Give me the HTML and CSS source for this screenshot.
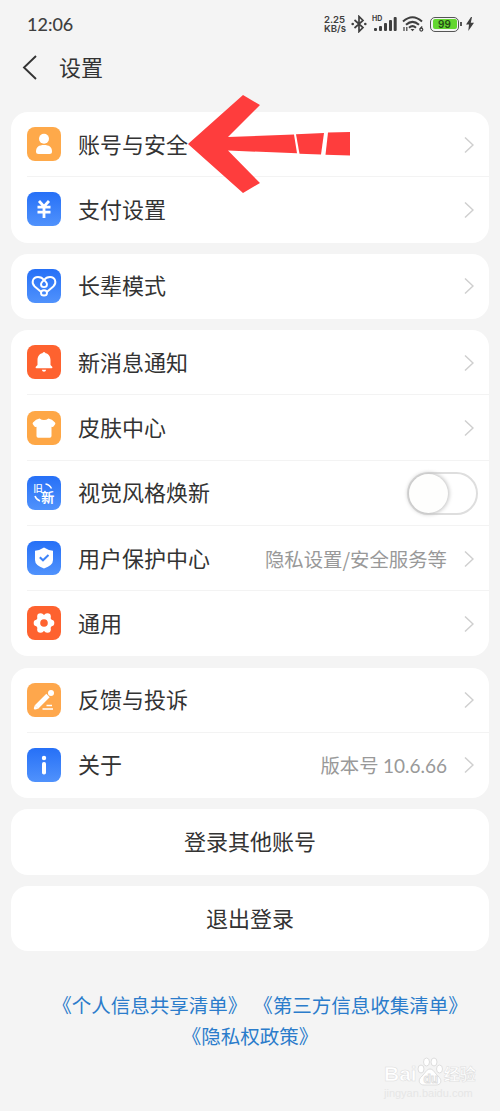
FILE: index.html
```html
<!DOCTYPE html>
<html lang="zh-CN">
<head>
  <meta charset="UTF-8">
  <meta name="viewport" content="width=device-width, initial-scale=1.0">
  <title>设置</title>
  <link rel="stylesheet" href="styles.css">
</head>
<body>

<!-- shared gradients and the row arrow -->
<svg class="defs" width="0" height="0">
  <defs>
    <linearGradient id="blue" x1="0" y1="0" x2="0" y2="1"><stop offset="0" stop-color="#2670f7"/><stop offset="1" stop-color="#5092fc"/></linearGradient>
    <symbol id="chevron" viewBox="0 0 10 18"><path d="M1 1.500L9 9L1 16.500" fill="none" stroke="#cfcfcf" stroke-width="1.500"/></symbol>
  </defs>
</svg>

<div class="status-bar">
  <span class="time">12:06</span>
  <div class="status-icons">
    <div class="speed"><span>2.25</span><span>KB/s</span></div>
    <svg class="bluetooth" width="16" height="18" viewBox="0 0 16 18">
      <path d="M3.500 5L12 12.500L8 16.500V1.500L12 5.500L3.500 13" fill="none" stroke="#3f3f3f" stroke-width="1.700"/>
      <circle cx="1.700" cy="9" r="1.300" fill="#3f3f3f"/><circle cx="14.300" cy="9" r="1.300" fill="#3f3f3f"/>
    </svg>
    <div class="signal">
      <span class="hd">HD</span>
      <svg width="24" height="18" viewBox="0 0 24 18" fill="#3f3f3f">
        <rect x="1" y="13" width="3" height="3" rx="1"/><rect x="6" y="11" width="3" height="5" rx="1"/><rect x="11" y="8" width="3" height="8" rx="1"/><rect x="16" y="5" width="3" height="11" rx="1"/><rect x="20.700" y="2" width="3" height="14" rx="1"/>
      </svg>
    </div>
    <svg class="wifi" width="22" height="18" viewBox="0 0 22 18">
      <g fill="none" stroke="#3f3f3f" stroke-width="2">
        <path d="M1 6.500Q10.500 -2 20 6.500"/><path d="M4 9.800Q10.500 4 17 9.800"/><path d="M7 12.700Q10.500 9.500 14 12.700"/>
        <path d="M2 12v4M4.800 12v4" stroke-width="1.200"/>
        <path d="M20.200 11.500L18 14" stroke-width="1.300"/><circle cx="19.300" cy="14.600" r="1.500" stroke-width="1.200"/>
      </g>
      <path d="M8.500 14h4l-2 2.300z" fill="#3f3f3f"/>
    </svg>
    <div class="battery"><span>99</span></div>
    <svg class="bolt" width="8" height="14" viewBox="0 0 8 14"><path d="M5 0L0 7.500H3L2.300 14L8 5.800H4.800L6 0z" fill="#3f3f3f"/></svg>
  </div>
</div>

<div class="nav">
  <svg width="16" height="26" viewBox="0 0 16 26"><path d="M14 1L2 12.500L14 24" fill="none" stroke="#333" stroke-width="1.900"/></svg>
  <h1>设置</h1>
</div>

<div class="settings">
  <div class="card">
    <div class="row">
      <svg class="icon" viewBox="0 0 34 34"><rect width="34" height="34" rx="8" fill="#fea94a"/><circle cx="17" cy="11.800" r="5" fill="#fff"/><path d="M9 24.500C9 20 12 18 17 18S25 20 25 24.500Q25 27 22.500 27H11.500Q9 27 9 24.500z" fill="#fff"/></svg>
      <div class="row-body"><span class="label">账号与安全</span><svg class="chevron"><use href="#chevron"/></svg></div>
      <svg class="pointer" width="164" height="100" viewBox="0 0 164 100" fill="#fe3d3d">
        <path d="M0 49L55 0L72 10L40 42L106 39.500L109 58.300L40 55.500L72 88L55 98z"/>
        <path d="M108 39.200L136 38L133 59.500L111.500 58.700z"/>
        <path d="M140 37.600L162 37V60.500L137.500 59.700z"/>
      </svg>
    </div>
    <div class="row">
      <svg class="icon" viewBox="0 0 34 34"><rect width="34" height="34" rx="8" fill="url(#blue)"/><path d="M12 9L17 14.500L22 9M10.500 15.200H23.500M10.500 20.200H23.500M17 14V26" fill="none" stroke="#fff" stroke-width="2.800"/></svg>
      <div class="row-body"><span class="label">支付设置</span><svg class="chevron"><use href="#chevron"/></svg></div>
    </div>
  </div>

  <div class="card">
    <div class="row">
      <svg class="icon" viewBox="0 0 34 34"><rect width="34" height="34" rx="8" fill="url(#blue)"/>
        <g fill="none" stroke="#fff" stroke-width="1.900" stroke-linecap="round" stroke-linejoin="round">
          <path d="M14.200 23L7.700 17.500C3.800 13.500 5.800 8 11 8C13.800 8 15.500 9 17 11C18.500 9 20.200 8 23 8C28.200 8 30.200 13.500 26.300 17.500L19.800 23"/>
          <path d="M17 11C14.800 13 14 14 14 15.200A3 2.900 0 0 0 20 15.200C20 14 19.200 13 17 11z"/>
          <ellipse cx="17" cy="23.900" rx="3" ry="2.600"/>
        </g></svg>
      <div class="row-body"><span class="label">长辈模式</span><svg class="chevron"><use href="#chevron"/></svg></div>
    </div>
  </div>

  <div class="card">
    <div class="row">
      <svg class="icon" viewBox="0 0 34 34"><rect width="34" height="34" rx="8" fill="#fe622f"/><g fill="#fff"><circle cx="17" cy="8.600" r="1.500"/><path d="M17 8C12.500 8 10.500 11.500 10.500 15V20L8.800 21.800Q8 23.300 9.500 23.300H24.500Q26 23.300 25.200 21.800L23.500 20V15C23.500 11.500 21.500 8 17 8z"/><path d="M14.800 24.700H19.200Q18.800 26.800 17 26.800T14.800 24.700z"/></g></svg>
      <div class="row-body"><span class="label">新消息通知</span><svg class="chevron"><use href="#chevron"/></svg></div>
    </div>
    <div class="row">
      <svg class="icon" viewBox="0 0 34 34"><rect width="34" height="34" rx="8" fill="#fea746"/><path d="M12.500 7.500Q17 10.500 21.500 7.500Q25 8 28 11.500Q28.800 12.500 28 13.500L26.500 15.600Q25.800 16.400 24.500 15.700V25Q24.500 26.700 22.800 26.700H11.200Q9.500 26.700 9.500 25V15.700Q8.200 16.400 7.500 15.600L6 13.500Q5.200 12.500 6 11.500Q9 8 12.500 7.500z" fill="#fff"/></svg>
      <div class="row-body"><span class="label">皮肤中心</span><svg class="chevron"><use href="#chevron"/></svg></div>
    </div>
    <div class="row">
      <svg class="icon" viewBox="0 0 34 34"><rect width="34" height="34" rx="8" fill="url(#blue)"/><g class="icon-text"><text x="6.300" y="15.500" font-size="9.500" font-weight="500">旧</text><text x="14.300" y="26" font-size="13" font-weight="700">新</text></g><path d="M18.500 8Q22.500 8.700 24.500 12.500M8 20Q9 23.500 13 25" fill="none" stroke="#fff" stroke-width="1.500"/></svg>
      <div class="row-body"><span class="label">视觉风格焕新</span><div class="switch"></div></div>
    </div>
    <div class="row">
      <svg class="icon" viewBox="0 0 34 34"><rect width="34" height="34" rx="8" fill="url(#blue)"/><path d="M17 6.500Q21.500 9.500 26 9.700V19Q26 24.500 17 27.500Q8 24.500 8 19V9.700Q12.500 9.500 17 6.500z" fill="#fff"/><path d="M12.800 16.200L16 19.300L21.500 14" fill="none" stroke="#3d83f8" stroke-width="2"/></svg>
      <div class="row-body"><span class="label">用户保护中心</span><span class="value">隐私设置/安全服务等</span><svg class="chevron"><use href="#chevron"/></svg></div>
    </div>
    <div class="row">
      <svg class="icon" viewBox="0 0 34 34"><rect width="34" height="34" rx="8" fill="#fe622f"/><g fill="#fff"><circle cx="17" cy="17" r="8.300"/><circle cx="10" cy="17" r="3.300"/><circle cx="24" cy="17" r="3.300"/><circle cx="13.500" cy="10.600" r="3.300"/><circle cx="20.500" cy="10.600" r="3.300"/><circle cx="13.500" cy="23.400" r="3.300"/><circle cx="20.500" cy="23.400" r="3.300"/></g><circle cx="17" cy="17" r="3.800" fill="#fe622f"/></svg>
      <div class="row-body"><span class="label">通用</span><svg class="chevron"><use href="#chevron"/></svg></div>
    </div>
  </div>

  <div class="card">
    <div class="row">
      <svg class="icon" viewBox="0 0 34 34"><rect width="34" height="34" rx="8" fill="#fea74c"/><path d="M9.500 24L21 12.500" stroke="#fff" stroke-width="4.800"/><path d="M7.800 22.300L6.800 25.300Q6.800 26.700 8.300 26.500L11.200 25.700z" fill="#fff"/><circle cx="24" cy="10" r="3" fill="#fff"/><path d="M19.500 22.500H25M15.500 26H26" stroke="#fff" stroke-width="1.300"/></svg>
      <div class="row-body"><span class="label">反馈与投诉</span><svg class="chevron"><use href="#chevron"/></svg></div>
    </div>
    <div class="row">
      <svg class="icon" viewBox="0 0 34 34"><rect width="34" height="34" rx="8" fill="url(#blue)"/><circle cx="17" cy="10" r="2.200" fill="#fff"/><rect x="15" y="14" width="4" height="12.500" rx="1.800" fill="#fff"/></svg>
      <div class="row-body"><span class="label">关于</span><span class="value">版本号 <span class="version">10.6.66</span></span><svg class="chevron"><use href="#chevron"/></svg></div>
    </div>
  </div>

  <div class="card action">登录其他账号</div>
  <div class="card action">退出登录</div>
</div>

<div class="policies">
  <div class="policy-line first"><a>《个人信息共享清单》</a><a>《第三方信息收集清单》</a></div>
  <div class="policy-line"><a>《隐私权政策》</a></div>
</div>

<div class="watermark">
  <div class="brand">
    <span>Bai</span>
    <svg width="26" height="29" viewBox="0 0 26 29" fill="#fff" stroke="#dedede" stroke-width="1">
      <ellipse cx="4" cy="12" rx="3" ry="4"/><ellipse cx="9.500" cy="5" rx="3" ry="4"/><ellipse cx="17" cy="5" rx="3" ry="4"/><ellipse cx="22.500" cy="12" rx="3" ry="4"/>
      <path d="M13 12C9.500 12 8.500 16 5 19C-0.500 24 3 28 7 28H19C24 28 26 23.500 21 19C17.500 16 16.500 12 13 12z"/>
      <text x="6.500" y="26" font-size="12" font-family="Liberation Sans, sans-serif">du</text>
    </svg>
    <span class="exp">经验</span>
  </div>
  <div class="site">jingyan.baidu.com</div>
</div>

</body>
</html>
```
FILE: styles.css
```css
* {
  box-sizing: border-box;
}

body {
  margin: 0;
  height: 1111px;
  overflow: hidden;
  position: relative;
  background-color: #f4f4f4;
  color: #333;
  font-family: "Noto Sans CJK SC", sans-serif;
}

svg {
  flex-shrink: 0;
}

.defs {
  display: block;
}

.status-bar {
  height: 48px;
  padding: 0 26px 0 27px;
  display: flex;
  align-items: center;
  justify-content: space-between;
  color: #3f3f3f;
}

.time {
  font-family: Lato, sans-serif;
  font-size: 18px;
  font-weight: 500;
  line-height: 22px;
  padding-bottom: 1px;
}

.status-icons {
  display: flex;
  align-items: center;
}

.speed {
  display: flex;
  flex-direction: column;
  width: 23px;
  font-family: Inter, sans-serif;
  font-size: 9.600px;
  font-weight: 600;
  line-height: 9px;
}

.bluetooth {
  margin-left: 4px;
}

.signal {
  display: flex;
  position: relative;
  margin-left: 6px;
}

.hd {
  position: absolute;
  left: -1px;
  top: 0;
  font: 700 7px/8px Inter, sans-serif;
}

.wifi {
  margin-left: 5px;
}

.battery {
  position: relative;
  width: 29px;
  height: 15px;
  margin-left: 6px;
  margin-right: 2px;
  padding: 1.500px;
  border: 1.500px solid #555;
  border-radius: 5px;
}

.battery span {
  display: block;
  height: 10px;
  border-radius: 2px;
  background: #63d72f;
  color: #244b15;
  font: 600 10px/10px Inter, sans-serif;
  text-align: center;
}

.battery::after {
  content: "";
  position: absolute;
  right: -4px;
  top: 4px;
  width: 2px;
  height: 4px;
  background: #555;
}

.bolt {
  margin-left: 5px;
}

.nav {
  height: 64px;
  padding: 0 22px 24px;
  display: flex;
  align-items: center;
}

h1 {
  margin: 0 0 0 21px;
  padding-bottom: 4px;
  font-size: 22px;
  font-weight: 400;
  line-height: 36px;
}

.settings {
  display: flex;
  flex-direction: column;
  gap: 11.200px;
  padding: 0 11px;
}

.card {
  background-color: #fff;
  border-radius: 17px;
}

.row {
  position: relative;
  display: flex;
  align-items: center;
  height: 65.250px;
  padding-left: 16px;
}

.icon {
  width: 34px;
  height: 34px;
  margin-bottom: 1px;
}

.icon-text {
  fill: #fff;
}

.row-body {
  flex: 1;
  display: flex;
  align-items: center;
  height: 100%;
  margin-left: 17px;
  padding-right: 15px;
}

/* divider starts under the icon */
.row + .row::before {
  content: "";
  position: absolute;
  left: 16px;
  right: 0;
  top: -1px;
  height: 1px;
  background-color: #f3f3f3;
}

.label {
  flex: 1;
  padding-bottom: 4px;
  font-size: 22px;
  line-height: 32px;
}

.value {
  margin-right: 17px;
  padding-bottom: 1px;
  color: #999;
  font-size: 19.400px;
}

.version {
  font-family: Lato, sans-serif;
  font-size: 19px;
}

.chevron {
  width: 10px;
  height: 18px;
}

.pointer {
  position: absolute;
  left: 177px;
  top: -17px;
  z-index: 2;
}

.switch {
  width: 71px;
  height: 43px;
  margin-right: -4px;
  border: 2px solid #dedede;
  border-radius: 22px;
}

.switch::before {
  content: "";
  display: block;
  width: 39px;
  height: 39px;
  border-radius: 50%;
  background: #fefefd;
  box-shadow: 0 0 4px 1px #bdbdbd;
}

.action {
  height: 65.250px;
  font-size: 22px;
  line-height: 63px;
  text-align: center;
}

.policies {
  margin-top: 38px;
  color: #2b7ccb;
  font-size: 19.500px;
  line-height: 31px;
}

.policy-line {
  display: flex;
  justify-content: center;
  gap: 6px;
}

.policy-line.first {
  padding-left: 20px;
}

.watermark {
  position: absolute;
  left: 384px;
  top: 1056px;
  color: #fff;
}

.brand {
  display: flex;
  align-items: flex-end;
  height: 30px;
  font: 700 21px/24px "Liberation Sans", sans-serif;
  -webkit-text-stroke: 0.500px #dcdcdc;
}

.brand .exp {
  margin-left: 1px;
  font: 700 16px/26px "Noto Sans CJK SC", sans-serif;
}

.site {
  font: 11px/14px "Liberation Sans", sans-serif;
  color: #e6e6e6;
}
```
